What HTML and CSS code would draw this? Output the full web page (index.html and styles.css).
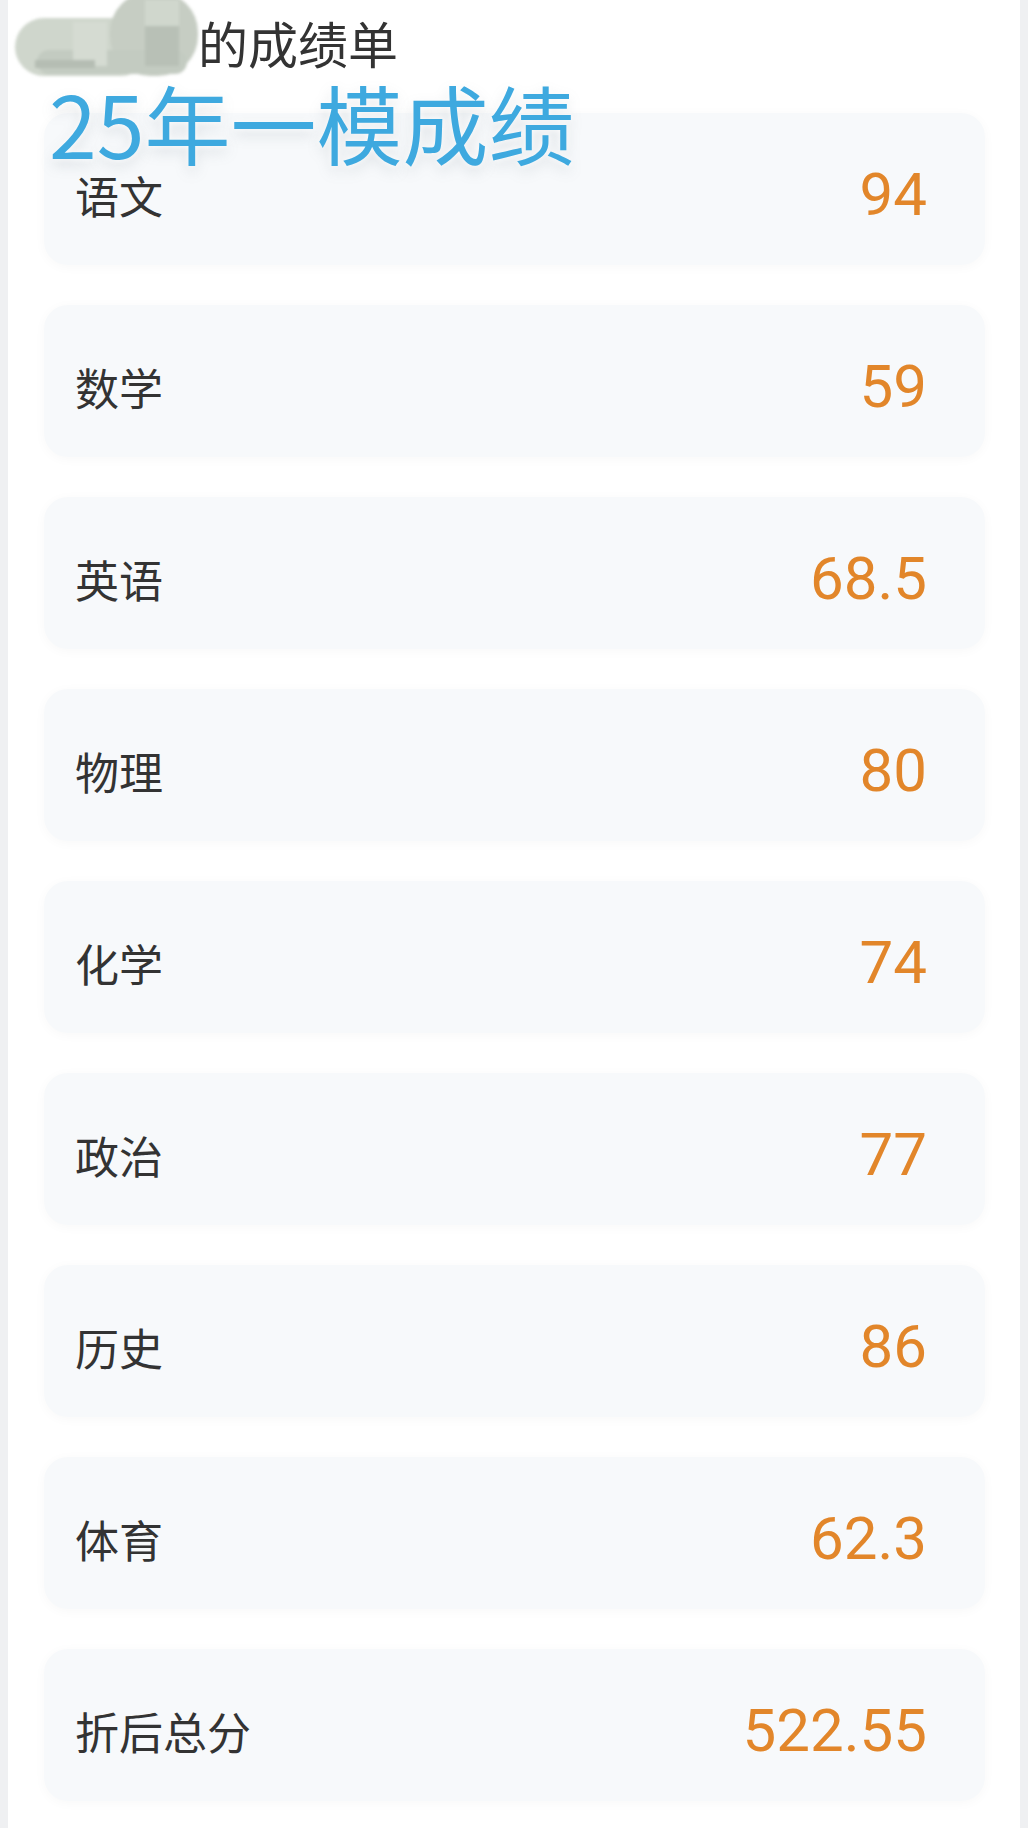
FILE: index.html
```html
<!DOCTYPE html>
<html lang="zh-CN">
<head>
<meta charset="utf-8">
<title>成绩单</title>
<link rel="stylesheet" href="styles.css">
</head>
<body>
<div class="panel">
  <header class="head">
    <span class="mask" aria-hidden="true">
      <span class="blob b1"></span>
      <span class="blob b2"></span>
      <span class="blob b3"></span>
      <span class="tile t1"></span>
      <span class="tile t2"></span>
      <span class="tile t3"></span>
      <span class="tile t4"></span>
    </span><span class="title">的成绩单</span>
  </header>
  <div class="stamp">25年一模成绩</div>
  <ul class="list">
    <li class="card"><span class="name">语文</span><span class="score">94</span></li>
    <li class="card"><span class="name">数学</span><span class="score">59</span></li>
    <li class="card"><span class="name">英语</span><span class="score">68.5</span></li>
    <li class="card"><span class="name">物理</span><span class="score">80</span></li>
    <li class="card"><span class="name">化学</span><span class="score">74</span></li>
    <li class="card"><span class="name">政治</span><span class="score">77</span></li>
    <li class="card"><span class="name">历史</span><span class="score">86</span></li>
    <li class="card"><span class="name">体育</span><span class="score">62.3</span></li>
    <li class="card"><span class="name">折后总分</span><span class="score">522.55</span></li>
  </ul>
</div>
</body>
</html>
```
FILE: styles.css
```css
html, body {
  margin: 0;
  padding: 0;
}
body {
  background: #eff0f2;
  padding: 0 8px;
  font-family: "Noto Sans CJK SC", "Noto Sans", sans-serif;
  color: #333333;
}
.panel {
  position: relative;
  background: #ffffff;
  min-height: 1828px;
  overflow: hidden;
}
.head {
  display: flex;
  align-items: center;
  height: 78px;
  padding-left: 7px;
}
.mask {
  position: relative;
  display: inline-block;
  width: 183px;
  height: 78px;
  flex: none;
  filter: blur(1.5px);
}
.blob {
  position: absolute;
  display: block;
}
.b1 {
  left: 0;
  top: 18px;
  width: 135px;
  height: 58px;
  border-radius: 29px;
  background: #cfd6cc;
}
.b2 {
  left: 95px;
  top: -8px;
  width: 88px;
  height: 84px;
  border-radius: 40px;
  background: #c6cdc3;
}
.b3 {
  left: 22px;
  top: 50px;
  width: 150px;
  height: 24px;
  border-radius: 12px;
  background: #c3cbc1;
}
.tile {
  position: absolute;
  display: block;
}
.t1 { left: 58px; top: 22px; width: 34px; height: 44px; background: #d5dbd2; }
.t2 { left: 130px; top: 26px; width: 34px; height: 40px; background: #b8c0b6; }
.t3 { left: 130px; top: 0; width: 34px; height: 26px; background: #d0d7cd; }
.t4 { left: 20px; top: 60px; width: 60px; height: 8px; background: #b5bdb3; }
.title {
  font-size: 50px;
  line-height: 60px;
  color: #333333;
  padding-top: 6px;
}
.stamp {
  position: absolute;
  left: 41px;
  top: 79px;
  font-size: 86px;
  line-height: 86px;
  color: #3ea9df;
  text-shadow: 0 0 6px #ffffff, 0 6px 14px rgba(120, 130, 140, 0.22);
  white-space: nowrap;
  z-index: 2;
}
.list {
  list-style: none;
  margin: 35px 35px 0 36px;
  padding: 0;
  display: flex;
  flex-direction: column;
  gap: 40px;
}
.card {
  height: 152px;
  box-sizing: border-box;
  padding: 12px 58px 0 31px;
  display: flex;
  align-items: center;
  justify-content: space-between;
  background: #f7f9fb;
  border-radius: 24px;
  box-shadow: 0 2px 12px rgba(0, 0, 0, 0.03);
}
.name {
  font-size: 44px;
  color: #333333;
}
.score {
  font-family: Roboto, "Noto Sans", sans-serif;
  font-size: 60px;
  color: #e2862a;
  margin-top: -2px;
}
```
